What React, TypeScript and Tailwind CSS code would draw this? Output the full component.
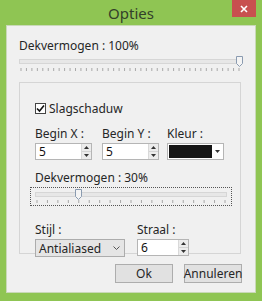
import React from "react";

const font = { fontFamily: '"Noto Sans", "Open Sans", Arial, sans-serif' };

function Ticks({ count, width }: { count: number; width: number }) {
  const xs = Array.from({ length: count }, (_, i) => 2 + (i * (width - 4)) / (count - 1));
  return (
    <svg width={width} height={5} className="block">
      {xs.map((x, i) => (
        <line key={i} x1={x} x2={x} y1={0} y2={3} stroke="#a8a8a8" strokeWidth={1} />
      ))}
    </svg>
  );
}

function Thumb() {
  return (
    <svg width={7} height={11} className="block">
      <path d="M0.5 0.5 H6.5 V7.5 L3.5 10.5 L0.5 7.5 Z" fill="#f4f4f4" stroke="#8a9bb0" />
    </svg>
  );
}

function Spinner() {
  return (
    <div className="flex flex-col w-[10px] h-full border-l border-[#d9d9d9]">
      <div className="flex-1 flex items-center justify-center bg-[#ececec] border-b border-[#d4d4d4]">
        <svg width={5} height={3}><path d="M0 3 L2.5 0 L5 3 Z" fill="#333" /></svg>
      </div>
      <div className="flex-1 flex items-center justify-center bg-[#ececec]">
        <svg width={5} height={3}><path d="M0 0 L2.5 3 L5 0 Z" fill="#333" /></svg>
      </div>
    </div>
  );
}

function NumInput({ value, w }: { value: string; w: string }) {
  return (
    <div className={`flex h-[17px] bg-white border border-[#b5b5b5] ${w}`}>
      <div className="flex-1 pl-[3px] text-[12px] leading-[15px] text-[#111]">{value}</div>
      <Spinner />
    </div>
  );
}

export default function App() {
  return (
    <div className="w-[262px] h-[301px] bg-[#8fc553] flex flex-col text-[#262626]" style={font}>
      <div className="h-[25px] relative flex items-center justify-center">
        <span className="text-[15px] text-[#33402a] leading-none mt-[1px]">Opties</span>
        <div className="absolute right-[6px] top-0 w-[24px] h-[17px] bg-[#c8504f] flex items-center justify-center">
          <svg width={8} height={8}>
            <path d="M1 1 L7 7 M7 1 L1 7" stroke="#fff" strokeWidth={1.6} />
          </svg>
        </div>
      </div>
      <div className="flex-1 ml-[6px] mr-[6px] mb-[8px] bg-[#f0f0f0] border border-[#c9d9b8] flex flex-col pl-[12px] pr-[13px] pt-[12px] text-[12px]">
        <div className="leading-[15px]">Dekvermogen : 100%</div>
        <div className="mt-[3px] relative w-[222px]">
          <div className="h-[5px] mt-[3px] bg-[#e7e7e7] border border-[#d6d6d6]" />
          <div className="absolute right-[-2px] top-0"><Thumb /></div>
          <div className="mt-[4px]"><Ticks count={41} width={222} /></div>
        </div>

        <div className="mt-[9px] w-[222px] h-[172px] border border-[#d5d5d5] pl-[15px] pt-[18px] flex flex-col">
          <div className="flex items-center gap-[3px]">
            <div className="w-[11px] h-[11px] border border-[#444] bg-white flex items-center justify-center">
              <svg width={9} height={9}><path d="M1 4.5 L3.5 7 L8 1.5" stroke="#111" strokeWidth={1.6} fill="none" /></svg>
            </div>
            <span className="leading-[15px]">Slagschaduw</span>
          </div>

          <div className="flex mt-[10px]">
            <div className="flex flex-col w-[67px]">
              <span className="leading-[15px]">Begin X :</span>
              <div className="mt-[2px]"><NumInput value="5" w="w-[57px]" /></div>
            </div>
            <div className="flex flex-col w-[65px]">
              <span className="leading-[15px]">Begin Y :</span>
              <div className="mt-[2px]"><NumInput value="5" w="w-[57px]" /></div>
            </div>
            <div className="flex flex-col">
              <span className="leading-[15px]">Kleur :</span>
              <div className="mt-[2px] flex h-[17px] w-[57px] bg-white border border-[#b5b5b5] items-center p-[1px]">
                <div className="w-[43px] h-full bg-[#151515]" />
                <div className="flex-1 flex items-center justify-center">
                  <svg width={5} height={3}><path d="M0 0 L2.5 3 L5 0 Z" fill="#333" /></svg>
                </div>
              </div>
            </div>
          </div>

          <div className="mt-[10px] leading-[15px]">Dekvermogen : 30%</div>
          <div className="mt-[2px] ml-[-5px] w-[202px] h-[20px] border border-dotted border-[#555] relative px-[4px] pt-[2px]">
            <div className="h-[5px] mt-[2px] bg-[#e7e7e7] border border-[#d6d6d6]" />
            <div className="absolute left-[44px] top-[1px]"><Thumb /></div>
            <div className="mt-[3px]"><Ticks count={19} width={192} /></div>
          </div>

          <div className="flex mt-[16px]">
            <div className="flex flex-col w-[102px]">
              <span className="leading-[15px]">Stijl :</span>
              <div className="mt-[2px] w-[90px] h-[18px] bg-[#e5e5e5] border border-[#acacac] flex items-center pl-[3px] pr-[4px]">
                <span className="flex-1 text-[12px] leading-[15px]">Antialiased</span>
                <svg width={7} height={5}><path d="M0.5 0.5 L3.5 3.5 L6.5 0.5" stroke="#555" fill="none" /></svg>
              </div>
            </div>
            <div className="flex flex-col">
              <span className="leading-[15px]">Straal :</span>
              <div className="mt-[2px]"><NumInput value="6" w="w-[52px]" /></div>
            </div>
          </div>
        </div>

        <div className="flex justify-end gap-[11px] mt-[10px] w-[223px]">
          <div className="w-[58px] h-[19px] bg-[#e1e1e1] border border-[#adadad] flex items-center justify-center leading-none">Ok</div>
          <div className="w-[58px] h-[19px] bg-[#e1e1e1] border border-[#adadad] flex items-center justify-center leading-none">Annuleren</div>
        </div>
      </div>
    </div>
  );
}
